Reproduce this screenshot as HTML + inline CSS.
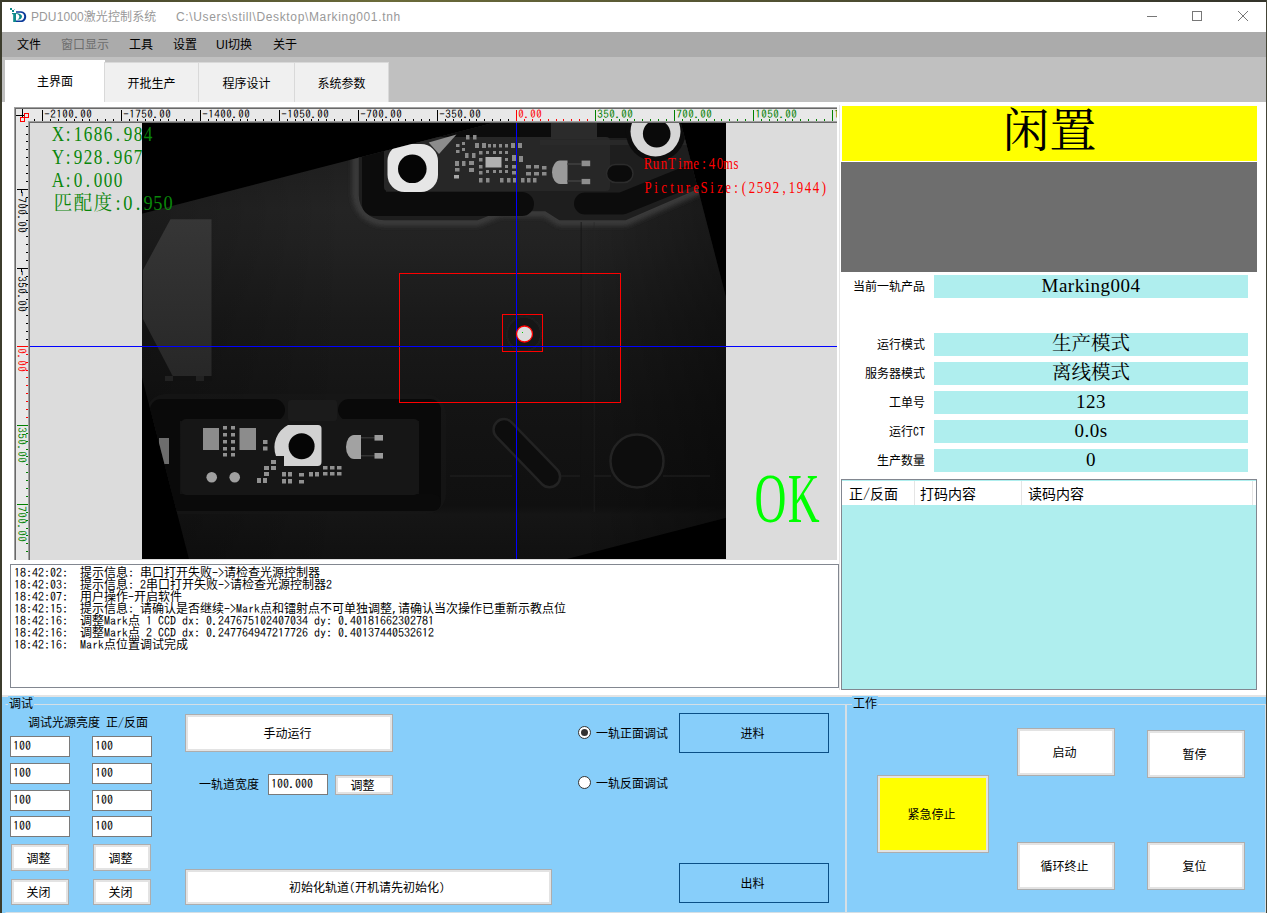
<!DOCTYPE html>
<html lang="zh-CN">
<head>
<meta charset="utf-8">
<title>PDU1000激光控制系统</title>
<style>
*{box-sizing:border-box;margin:0;padding:0}
html,body{width:1267px;height:913px;overflow:hidden;background:#fff}
body{position:relative;font-family:"Liberation Sans","Noto Sans CJK SC",sans-serif;font-size:12px;color:#000}
.abs{position:absolute}
.song{font-family:"Liberation Serif","Noto Serif CJK SC",serif}
.c{font-family:"Noto Sans CJK SC",sans-serif;font-size:12px}
.l{font-family:"IPAGothic","Liberation Mono",monospace;font-size:12px}
#frame{left:0;top:0;width:1267px;height:913px;background:#fff}
#edgeT{left:0;top:0;width:1267px;height:2px;background:linear-gradient(90deg,#3a3a28,#6b6b3a 30%,#4a4a30 70%,#33332a)}
#edgeL{left:0;top:0;width:2px;height:913px;background:#3c3c2c}
#edgeR{left:1266px;top:0;width:1px;height:913px;background:#444436}
#title{left:2px;top:2px;width:1264px;height:30px;background:#fff}
#title .t{top:7px;font-size:12px;color:#999;white-space:nowrap;line-height:16px}
#menu{left:2px;top:32px;width:1264px;height:25px;background:#ababab}
#menu span{position:absolute;top:5px;font-size:12px;line-height:17px;white-space:nowrap}
#tabs{left:2px;top:57px;width:1264px;height:45px;background:#c0c0c0}
.tab{position:absolute;top:62px;height:40px;background:#f0f0f0;border:1px solid #d9d9d9;border-bottom:none;font-size:12px;text-align:center;line-height:42px}
.tab.sel{top:60px;height:42px;background:#fff;border-color:#fff;line-height:42px}
#content{left:2px;top:102px;width:1264px;height:595px;background:#fff}
#bottom{left:2px;top:697px;width:1264px;height:216px;background:#87cefa}
.btn{position:absolute;background:#fff;border:3px solid #e3e3e3;outline:1px solid #adadad;outline-offset:-1px;text-align:center;white-space:nowrap;padding-right:3px}
.fbtn{position:absolute;border:1px solid #0a4f86;text-align:center;white-space:nowrap;padding-right:3px}
.inp{position:absolute;background:#fff;border:1px solid #7a7a7a;line-height:17px;padding-left:2px;white-space:nowrap}
.lbl{position:absolute;white-space:nowrap;line-height:14px}
.rl{left:800px;width:125px;text-align:right}
.val{position:absolute;left:934px;width:314px;height:23px;background:#afeeee;text-align:center;font-size:19px;line-height:21px;white-space:nowrap;letter-spacing:0.5px}
.val.cv{font-size:19.500px;line-height:22.500px;letter-spacing:0}
.gb{position:absolute;border:1px solid #d5dfe5}
.gbl{position:absolute;background:#87cefa;padding:0 1px;line-height:13px;white-space:nowrap}
.radio{position:absolute;width:13px;height:13px;border-radius:50%;border:1px solid #333;background:#fff}
.radio.on::after{content:"";position:absolute;left:2px;top:2px;width:7px;height:7px;border-radius:50%;background:#333}
#log{left:10px;top:564px;width:829px;height:124px;background:#fff;border:1px solid #828790;padding:1px 0 0 3px;overflow:hidden}
.ll{height:12px;line-height:12px;white-space:nowrap}
#rp{left:840px;top:104px;width:418px;height:586px;background:#fff}
#idle{left:842px;top:106px;width:415px;height:55px;background:#ff0;text-align:center;font-size:47px;line-height:50px}
#graybox{left:841px;top:162px;width:416px;height:110px;background:#6e6e6e}
#tbl{left:841px;top:479px;width:416px;height:211px;background:#afeeee;border:1px solid #828790}
#th{position:absolute;left:0;top:1px;width:414px;height:24px;background:#fff}
#th span{position:absolute;top:3px;font-size:14px;line-height:20px;font-weight:400;white-space:nowrap}
#th b{font-family:"IPAGothic","Liberation Mono",monospace;font-weight:400}
#th i{position:absolute;top:0;width:1px;height:24px;background:#e5e5e5}
</style>
</head>
<body>
<div id="frame" class="abs"></div>
<div id="title" class="abs">
  <span class="abs t" style="left:29px;letter-spacing:0.100px">PDU1000激光控制系统</span>
  <span class="abs t" style="left:174px;letter-spacing:0.650px">C:\Users\still\Desktop\Marking001.tnh</span>
  <svg class="abs" style="left:0;top:0" width="1264" height="30" viewBox="2 2 1264 30">
    <g stroke="#777" fill="none" shape-rendering="crispEdges">
      <line x1="1147" y1="16.500" x2="1157" y2="16.500"/>
      <rect x="1192.500" y="11.500" width="9" height="9"/>
    </g>
    <g stroke="#777" fill="none"><line x1="1238" y1="11" x2="1248" y2="21"/><line x1="1248" y1="11" x2="1238" y2="21"/></g>
    <g id="logo">
      <rect x="10" y="8" width="2" height="2" fill="#0e8a8a"/><rect x="12" y="10" width="2" height="2" fill="#0e8a8a"/><rect x="14" y="9" width="1" height="1" fill="#8fcaca"/>
      <rect x="12" y="13" width="4" height="1.200" fill="#0e8a8a"/><rect x="13.200" y="13" width="2.800" height="9" fill="#0e8a8a"/>
      <path d="M16,13.300 C19,13 22,14.500 22,16.500 C22,18.500 20,19.800 17.300,19.800 C18.800,18.800 19.500,17.800 19.300,16.300 C19,14.600 17.500,14 16,14 Z" fill="#0e8a8a"/>
      <path d="M16,11.200 H21 C24.500,11.500 26.200,14 26.200,16.400 C26.200,19.500 24,22 21,22 H16 V20.600 H20.500 C22.800,20.500 24.200,18.800 24.200,16.500 C24.200,14.300 22.800,12.800 20.300,12.700 H16 Z" fill="#0a3a9a"/>
    </g>
  </svg>
</div>
<div id="menu" class="abs">
  <span style="left:15px">文件</span>
  <span style="left:59px;color:#6d6d6d">窗口显示</span>
  <span style="left:127px">工具</span>
  <span style="left:171px">设置</span>
  <span style="left:214px">UI切换</span>
  <span style="left:271px">关于</span>
</div>
<div id="tabs" class="abs"></div>
<div class="tab sel" style="left:5px;width:100px">主界面</div>
<div class="tab" style="left:104px;width:95px">开批生产</div>
<div class="tab" style="left:198px;width:97px">程序设计</div>
<div class="tab" style="left:294px;width:95px">系统参数</div>
<div id="content" class="abs"></div>
<div class="abs" style="left:2px;top:695px;width:1264px;height:2px;background:#e4e4e4"></div>

<svg class="abs" id="cam" style="left:0;top:0" width="1267" height="913" viewBox="0 0 1267 913">
<defs>
<clipPath id="rulclip"><rect x="16" y="109" width="821" height="12"/></clipPath>
<clipPath id="imgclip"><rect x="142" y="123" width="584" height="436"/></clipPath>
<clipPath id="rotclip"><polygon points="102.400,224 669.100,77.400 779.400,504 212.700,650.600"/></clipPath>
<linearGradient id="bgG" gradientUnits="userSpaceOnUse" x1="0" y1="122" x2="0" y2="558">
<stop offset="0" stop-color="#1c1c1c"/><stop offset="0.2" stop-color="#242424"/><stop offset="0.28" stop-color="#222"/><stop offset="0.45" stop-color="#1a1a1a"/><stop offset="0.65" stop-color="#141414"/><stop offset="0.88" stop-color="#101010"/><stop offset="0.9" stop-color="#151515"/><stop offset="1" stop-color="#111"/>
</linearGradient>
<linearGradient id="sideG" gradientUnits="userSpaceOnUse" x1="142" y1="0" x2="726" y2="0">
<stop offset="0" stop-color="#000" stop-opacity="0.25"/><stop offset="0.35" stop-color="#000" stop-opacity="0"/><stop offset="0.75" stop-color="#000" stop-opacity="0"/><stop offset="1" stop-color="#000" stop-opacity="0.35"/>
</linearGradient>
<linearGradient id="trapG" gradientUnits="userSpaceOnUse" x1="0" y1="219" x2="0" y2="376">
<stop offset="0" stop-color="#363636"/><stop offset="1" stop-color="#272727"/>
</linearGradient>
<filter id="blur3" x="-20%" y="-20%" width="140%" height="140%"><feGaussianBlur stdDeviation="2.500"/></filter>
<filter id="blur1" x="-20%" y="-20%" width="140%" height="140%"><feGaussianBlur stdDeviation="0.700"/></filter>
</defs>
<rect x="839" y="105" width="1" height="585" fill="#e6e6e6"/>
<rect x="14" y="107" width="823" height="453" fill="#a0a0a0"/>
<rect x="15" y="108" width="822" height="452" fill="#696969"/>
<rect x="16" y="109" width="821" height="451" fill="#e8e8e8"/>
<rect x="28" y="121" width="809" height="439" fill="#a0a0a0"/>
<rect x="29" y="122" width="808" height="438" fill="#696969"/>
<rect x="30" y="123" width="807" height="437" fill="#dcdcdc"/>
<g font-family="'IPAGothic','Liberation Mono',monospace" font-size="11" shape-rendering="crispEdges">
<rect x="42" y="110" width="1" height="11" fill="#000"/>
<text text-anchor="middle" x="47 53 59 65 71 77 83 89" y="117.5" fill="#000">-2100.00</text>
<rect x="50" y="119" width="1" height="2" fill="#000"/>
<rect x="58" y="119" width="1" height="2" fill="#000"/>
<rect x="66" y="119" width="1" height="2" fill="#000"/>
<rect x="74" y="119" width="1" height="2" fill="#000"/>
<rect x="82" y="119" width="1" height="2" fill="#000"/>
<rect x="89" y="119" width="1" height="2" fill="#000"/>
<rect x="97" y="119" width="1" height="2" fill="#000"/>
<rect x="105" y="119" width="1" height="2" fill="#000"/>
<rect x="113" y="119" width="1" height="2" fill="#000"/>
<rect x="121" y="110" width="1" height="11" fill="#000"/>
<text text-anchor="middle" x="126 132 138 144 150 156 162 168" y="117.5" fill="#000">-1750.00</text>
<rect x="129" y="119" width="1" height="2" fill="#000"/>
<rect x="137" y="119" width="1" height="2" fill="#000"/>
<rect x="145" y="119" width="1" height="2" fill="#000"/>
<rect x="153" y="119" width="1" height="2" fill="#000"/>
<rect x="160" y="119" width="1" height="2" fill="#000"/>
<rect x="168" y="119" width="1" height="2" fill="#000"/>
<rect x="176" y="119" width="1" height="2" fill="#000"/>
<rect x="184" y="119" width="1" height="2" fill="#000"/>
<rect x="192" y="119" width="1" height="2" fill="#000"/>
<rect x="200" y="110" width="1" height="11" fill="#000"/>
<text text-anchor="middle" x="205 211 217 223 229 235 241 247" y="117.5" fill="#000">-1400.00</text>
<rect x="208" y="119" width="1" height="2" fill="#000"/>
<rect x="216" y="119" width="1" height="2" fill="#000"/>
<rect x="224" y="119" width="1" height="2" fill="#000"/>
<rect x="232" y="119" width="1" height="2" fill="#000"/>
<rect x="240" y="119" width="1" height="2" fill="#000"/>
<rect x="247" y="119" width="1" height="2" fill="#000"/>
<rect x="255" y="119" width="1" height="2" fill="#000"/>
<rect x="263" y="119" width="1" height="2" fill="#000"/>
<rect x="271" y="119" width="1" height="2" fill="#000"/>
<rect x="279" y="110" width="1" height="11" fill="#000"/>
<text text-anchor="middle" x="284 290 296 302 308 314 320 326" y="117.5" fill="#000">-1050.00</text>
<rect x="287" y="119" width="1" height="2" fill="#000"/>
<rect x="295" y="119" width="1" height="2" fill="#000"/>
<rect x="303" y="119" width="1" height="2" fill="#000"/>
<rect x="311" y="119" width="1" height="2" fill="#000"/>
<rect x="318" y="119" width="1" height="2" fill="#000"/>
<rect x="326" y="119" width="1" height="2" fill="#000"/>
<rect x="334" y="119" width="1" height="2" fill="#000"/>
<rect x="342" y="119" width="1" height="2" fill="#000"/>
<rect x="350" y="119" width="1" height="2" fill="#000"/>
<rect x="358" y="110" width="1" height="11" fill="#000"/>
<text text-anchor="middle" x="363 369 375 381 387 393 399" y="117.5" fill="#000">-700.00</text>
<rect x="366" y="119" width="1" height="2" fill="#000"/>
<rect x="374" y="119" width="1" height="2" fill="#000"/>
<rect x="382" y="119" width="1" height="2" fill="#000"/>
<rect x="390" y="119" width="1" height="2" fill="#000"/>
<rect x="398" y="119" width="1" height="2" fill="#000"/>
<rect x="405" y="119" width="1" height="2" fill="#000"/>
<rect x="413" y="119" width="1" height="2" fill="#000"/>
<rect x="421" y="119" width="1" height="2" fill="#000"/>
<rect x="429" y="119" width="1" height="2" fill="#000"/>
<rect x="437" y="110" width="1" height="11" fill="#000"/>
<text text-anchor="middle" x="442 448 454 460 466 472 478" y="117.5" fill="#000">-350.00</text>
<rect x="445" y="119" width="1" height="2" fill="#000"/>
<rect x="453" y="119" width="1" height="2" fill="#000"/>
<rect x="461" y="119" width="1" height="2" fill="#000"/>
<rect x="469" y="119" width="1" height="2" fill="#000"/>
<rect x="476" y="119" width="1" height="2" fill="#000"/>
<rect x="484" y="119" width="1" height="2" fill="#000"/>
<rect x="492" y="119" width="1" height="2" fill="#000"/>
<rect x="500" y="119" width="1" height="2" fill="#000"/>
<rect x="508" y="119" width="1" height="2" fill="#000"/>
<rect x="516" y="110" width="1" height="11" fill="#f00"/>
<text text-anchor="middle" x="521 527 533 539" y="117.5" fill="#f00">0.00</text>
<rect x="524" y="119" width="1" height="2" fill="#f00"/>
<rect x="532" y="119" width="1" height="2" fill="#f00"/>
<rect x="540" y="119" width="1" height="2" fill="#f00"/>
<rect x="548" y="119" width="1" height="2" fill="#f00"/>
<rect x="556" y="119" width="1" height="2" fill="#f00"/>
<rect x="563" y="119" width="1" height="2" fill="#f00"/>
<rect x="571" y="119" width="1" height="2" fill="#f00"/>
<rect x="579" y="119" width="1" height="2" fill="#f00"/>
<rect x="587" y="119" width="1" height="2" fill="#f00"/>
<rect x="595" y="110" width="1" height="11" fill="#008000"/>
<text text-anchor="middle" x="600 606 612 618 624 630" y="117.5" fill="#008000">350.00</text>
<rect x="603" y="119" width="1" height="2" fill="#008000"/>
<rect x="611" y="119" width="1" height="2" fill="#008000"/>
<rect x="619" y="119" width="1" height="2" fill="#008000"/>
<rect x="627" y="119" width="1" height="2" fill="#008000"/>
<rect x="634" y="119" width="1" height="2" fill="#008000"/>
<rect x="642" y="119" width="1" height="2" fill="#008000"/>
<rect x="650" y="119" width="1" height="2" fill="#008000"/>
<rect x="658" y="119" width="1" height="2" fill="#008000"/>
<rect x="666" y="119" width="1" height="2" fill="#008000"/>
<rect x="674" y="110" width="1" height="11" fill="#008000"/>
<text text-anchor="middle" x="679 685 691 697 703 709" y="117.5" fill="#008000">700.00</text>
<rect x="682" y="119" width="1" height="2" fill="#008000"/>
<rect x="690" y="119" width="1" height="2" fill="#008000"/>
<rect x="698" y="119" width="1" height="2" fill="#008000"/>
<rect x="706" y="119" width="1" height="2" fill="#008000"/>
<rect x="714" y="119" width="1" height="2" fill="#008000"/>
<rect x="721" y="119" width="1" height="2" fill="#008000"/>
<rect x="729" y="119" width="1" height="2" fill="#008000"/>
<rect x="737" y="119" width="1" height="2" fill="#008000"/>
<rect x="745" y="119" width="1" height="2" fill="#008000"/>
<rect x="753" y="110" width="1" height="11" fill="#008000"/>
<text text-anchor="middle" x="758 764 770 776 782 788 794" y="117.5" fill="#008000">1050.00</text>
<rect x="761" y="119" width="1" height="2" fill="#008000"/>
<rect x="769" y="119" width="1" height="2" fill="#008000"/>
<rect x="777" y="119" width="1" height="2" fill="#008000"/>
<rect x="785" y="119" width="1" height="2" fill="#008000"/>
<rect x="792" y="119" width="1" height="2" fill="#008000"/>
<rect x="800" y="119" width="1" height="2" fill="#008000"/>
<rect x="808" y="119" width="1" height="2" fill="#008000"/>
<rect x="816" y="119" width="1" height="2" fill="#008000"/>
<rect x="824" y="119" width="1" height="2" fill="#008000"/>
<rect x="832" y="110" width="1" height="11" fill="#008000"/>
<text x="834" y="117.500" fill="#008000" clip-path="url(#rulclip)">1400.00</text>
<rect x="34" y="119" width="1" height="2" fill="#000"/>
<rect x="17" y="189" width="11" height="1" fill="#000"/>
<rect x="21" y="190" width="1" height="3" fill="#000"/>
<g transform="translate(17.800,191) rotate(90)"><text text-anchor="middle" x="3 9 15 21 27 33 39" y="0" fill="#000">-700.00</text></g>
<rect x="17" y="268" width="11" height="1" fill="#000"/>
<rect x="21" y="269" width="1" height="3" fill="#000"/>
<g transform="translate(17.800,270) rotate(90)"><text text-anchor="middle" x="3 9 15 21 27 33 39" y="0" fill="#000">-350.00</text></g>
<rect x="17" y="346" width="11" height="1" fill="#f00"/>
<g transform="translate(17.800,348) rotate(90)"><text text-anchor="middle" x="3 9 15 21" y="0" fill="#f00">0.00</text></g>
<rect x="17" y="425" width="11" height="1" fill="#008000"/>
<g transform="translate(17.800,427) rotate(90)"><text text-anchor="middle" x="3 9 15 21 27 33" y="0" fill="#008000">350.00</text></g>
<rect x="17" y="504" width="11" height="1" fill="#008000"/>
<g transform="translate(17.800,506) rotate(90)"><text text-anchor="middle" x="3 9 15 21 27 33" y="0" fill="#008000">700.00</text></g>
<rect x="26" y="126" width="2" height="1" fill="#000"/>
<rect x="26" y="134" width="2" height="1" fill="#000"/>
<rect x="26" y="141" width="2" height="1" fill="#000"/>
<rect x="26" y="149" width="2" height="1" fill="#000"/>
<rect x="26" y="157" width="2" height="1" fill="#000"/>
<rect x="26" y="165" width="2" height="1" fill="#000"/>
<rect x="26" y="173" width="2" height="1" fill="#000"/>
<rect x="26" y="181" width="2" height="1" fill="#000"/>
<rect x="26" y="197" width="2" height="1" fill="#000"/>
<rect x="26" y="205" width="2" height="1" fill="#000"/>
<rect x="26" y="213" width="2" height="1" fill="#000"/>
<rect x="26" y="220" width="2" height="1" fill="#000"/>
<rect x="26" y="228" width="2" height="1" fill="#000"/>
<rect x="26" y="236" width="2" height="1" fill="#000"/>
<rect x="26" y="244" width="2" height="1" fill="#000"/>
<rect x="26" y="252" width="2" height="1" fill="#000"/>
<rect x="26" y="260" width="2" height="1" fill="#000"/>
<rect x="26" y="276" width="2" height="1" fill="#000"/>
<rect x="26" y="284" width="2" height="1" fill="#000"/>
<rect x="26" y="292" width="2" height="1" fill="#000"/>
<rect x="26" y="299" width="2" height="1" fill="#000"/>
<rect x="26" y="307" width="2" height="1" fill="#000"/>
<rect x="26" y="315" width="2" height="1" fill="#000"/>
<rect x="26" y="323" width="2" height="1" fill="#000"/>
<rect x="26" y="331" width="2" height="1" fill="#000"/>
<rect x="26" y="339" width="2" height="1" fill="#000"/>
<rect x="26" y="354" width="2" height="1" fill="#f00"/>
<rect x="26" y="362" width="2" height="1" fill="#f00"/>
<rect x="26" y="370" width="2" height="1" fill="#f00"/>
<rect x="26" y="377" width="2" height="1" fill="#f00"/>
<rect x="26" y="385" width="2" height="1" fill="#f00"/>
<rect x="26" y="393" width="2" height="1" fill="#f00"/>
<rect x="26" y="401" width="2" height="1" fill="#f00"/>
<rect x="26" y="409" width="2" height="1" fill="#f00"/>
<rect x="26" y="417" width="2" height="1" fill="#f00"/>
<rect x="26" y="433" width="2" height="1" fill="#008000"/>
<rect x="26" y="441" width="2" height="1" fill="#008000"/>
<rect x="26" y="449" width="2" height="1" fill="#008000"/>
<rect x="26" y="456" width="2" height="1" fill="#008000"/>
<rect x="26" y="464" width="2" height="1" fill="#008000"/>
<rect x="26" y="472" width="2" height="1" fill="#008000"/>
<rect x="26" y="480" width="2" height="1" fill="#008000"/>
<rect x="26" y="488" width="2" height="1" fill="#008000"/>
<rect x="26" y="496" width="2" height="1" fill="#008000"/>
<rect x="26" y="512" width="2" height="1" fill="#008000"/>
<rect x="26" y="520" width="2" height="1" fill="#008000"/>
<rect x="26" y="528" width="2" height="1" fill="#008000"/>
<rect x="26" y="535" width="2" height="1" fill="#008000"/>
<rect x="26" y="543" width="2" height="1" fill="#008000"/>
<rect x="26" y="551" width="2" height="1" fill="#008000"/>
</g>
<g shape-rendering="crispEdges" fill="none">
<line x1="16" y1="115.500" x2="25" y2="115.500" stroke="#000"/>
<line x1="22.500" y1="109" x2="22.500" y2="118" stroke="#000"/>
<rect x="24.500" y="113.500" width="4" height="4" stroke="#f00"/>
<rect x="20.500" y="117.500" width="4" height="4" stroke="#f00"/>
</g>
<rect x="142" y="123" width="584" height="436" fill="#000"/>
<g clip-path="url(#imgclip)">
<g clip-path="url(#rotclip)">
<rect x="90" y="60" width="700" height="600" fill="url(#bgG)"/>
<rect x="90" y="60" width="700" height="600" fill="url(#sideG)"/>
<!-- left trapezoid -->
<polygon points="170.500,219.300 211.500,219.300 211.500,376 172.700,376 143,319 143,270" fill="url(#trapG)"/>
<rect x="150" y="376" width="62" height="5" fill="#111"/>
<rect x="165" y="376" width="8" height="5" fill="#222"/><rect x="196" y="376" width="8" height="5" fill="#222"/>
<!-- recess halo edge -->
<path d="M356,100 V194 a28,28 0 0 0 28,28 H478 l22,-9 H545 l14,9 H626 L693,193 L745,172" fill="none" stroke="#3c3c3c" stroke-width="7" filter="url(#blur3)"/>
<!-- recess floor -->
<path d="M358,100 V195 a26,26 0 0 0 26,26 H478 l22,-9 H545 l14,9 H626 L693,192 L745,171 V100 Z" fill="#1e1e1e" stroke="#3a3a3a" stroke-width="1.500"/>
<!-- seams -->
<rect x="580.500" y="222" width="1.500" height="290" fill="#121212" opacity="0.500"/>
<rect x="593.500" y="222" width="1.500" height="290" fill="#242424" opacity="0.350"/>
<!-- dark slots -->
<path d="M374,100 V204 H522" fill="none" stroke="#0c0c0c" stroke-width="24" stroke-linecap="round" stroke-linejoin="round"/>
<rect x="380" y="100" width="171" height="37" fill="#0c0c0c"/>
<rect x="597" y="100" width="50" height="38" fill="#0c0c0c"/>
<path d="M585,203.500 H622 L700,172" fill="none" stroke="#0c0c0c" stroke-width="22" stroke-linecap="round" stroke-linejoin="round"/>
<!-- pcb -->
<rect x="384" y="137" width="226" height="54" rx="4" fill="#272727"/>
<rect x="551" y="118" width="46" height="21" fill="#2b2b2b"/>
<rect x="540" y="140" width="200" height="5" fill="#2c2c2c" opacity="0.7"/>
<!-- left ring -->
<rect x="387.500" y="144" width="50.500" height="48" rx="17" fill="#e6e6e6"/>
<circle cx="412.300" cy="168.800" r="14.300" fill="#050505"/>
<polygon points="428.700,142.600 456.500,134.400 439,153.900" fill="#8c8c8c"/>
<!-- right ring -->
<circle cx="655.700" cy="131.500" r="30" fill="#0c0c0c"/>
<circle cx="655.500" cy="131.500" r="25" fill="#d6d6d6"/>
<circle cx="656.700" cy="133.800" r="13.800" fill="#0a0a0a"/>
<rect x="606.500" y="164.500" width="26.500" height="18" rx="9" fill="#0b0b0b" stroke="#2c2c2c" stroke-width="1.500"/>
<!-- half moon + pads -->
<path d="M567.500,160.600 V184 H560 a8,11.700 0 0 1 0,-23.400 z" fill="#9a9a9a"/>
<rect x="567.500" y="163" width="14" height="2" fill="#3a3a3a"/><rect x="567.500" y="180" width="14" height="2" fill="#3a3a3a"/>
<rect x="581.600" y="160.600" width="8.600" height="5.600" fill="#8e8e8e"/>
<rect x="581.600" y="178.900" width="8.600" height="5.300" fill="#8e8e8e"/>
<!-- components top -->
<g fill="#8a8a8a" filter="url(#blur1)">
<rect x="485.500" y="157" width="16" height="10.500" fill="#b0b0b0"/>
<rect x="466" y="135" width="3.500" height="4.500"/><rect x="473" y="135" width="3.500" height="4.500"/>
<rect x="456" y="144" width="3.500" height="3"/><rect x="462" y="142" width="3" height="3"/>
<rect x="456" y="150" width="3.500" height="3"/><rect x="462" y="148" width="3" height="3"/>
<rect x="475" y="143" width="4" height="5"/><rect x="482" y="143" width="4" height="5"/><rect x="488" y="144" width="3" height="3.500"/><rect x="493" y="144" width="3" height="3.500"/><rect x="499" y="144" width="3" height="3.500"/><rect x="505" y="144" width="3" height="3.500"/>
<rect x="511" y="143" width="4" height="5"/><rect x="518" y="143" width="4" height="5"/>
<rect x="465" y="153" width="3.500" height="5"/><rect x="472" y="153" width="3.500" height="5"/><rect x="479" y="151" width="3.500" height="3.500"/><rect x="486" y="151" width="3" height="3"/><rect x="493" y="151" width="3" height="3"/><rect x="499" y="151" width="3" height="3"/><rect x="505" y="151" width="3" height="3"/>
<rect x="479" y="158" width="3.500" height="3.500"/><rect x="505" y="158" width="3" height="3"/><rect x="512" y="155" width="4" height="6"/><rect x="519" y="156" width="4" height="6"/>
<rect x="455" y="161" width="4" height="5"/><rect x="462" y="161" width="3.500" height="5"/><rect x="469" y="161" width="5" height="4"/>
<rect x="479" y="165" width="3.500" height="3.500"/><rect x="505" y="165" width="3" height="3"/><rect x="512" y="165" width="5" height="3.500"/>
<rect x="455" y="168" width="4.500" height="3.500"/><rect x="469" y="168" width="5" height="4"/>
<rect x="479" y="171" width="3.500" height="3.500"/><rect x="486" y="170" width="3" height="3"/><rect x="493" y="170" width="3" height="3"/><rect x="499" y="170" width="3" height="3"/><rect x="505" y="170" width="3" height="3"/><rect x="512" y="171" width="5" height="3.500"/>
<rect x="454" y="175" width="5" height="3.500" fill="#aaa"/>
<rect x="479" y="178" width="3.500" height="4.500"/><rect x="486" y="178" width="3.500" height="4.500"/>
<rect x="500" y="178" width="3.500" height="4.500"/><rect x="507" y="178" width="3.500" height="4.500"/><rect x="513" y="178" width="3.500" height="4.500"/><rect x="521" y="178" width="3.500" height="4.500"/><rect x="527" y="178" width="3.500" height="4.500"/><rect x="533" y="178" width="3.500" height="4.500"/>
<rect x="526" y="165" width="5" height="3.500"/><rect x="534" y="165" width="5" height="3.500"/><rect x="526" y="172" width="5" height="3.500"/><rect x="534" y="172" width="5" height="3.500"/><rect x="542" y="166" width="4.500" height="3.500"/><rect x="542" y="172" width="4.500" height="3.500"/>
</g>
<!-- bottom recess: dark slots around pcb -->
<rect x="146" y="394" width="300" height="120" rx="20" fill="#181818" opacity="0.6"/>
<rect x="150" y="399" width="135" height="22" rx="11" fill="#090909"/>
<rect x="338" y="399" width="100" height="22" rx="11" fill="#090909"/>
<rect x="419" y="399" width="22" height="112" rx="11" fill="#090909"/>
<rect x="150" y="494" width="291" height="17" rx="8" fill="#0a0a0a"/>
<rect x="150" y="410" width="30" height="95" fill="#0a0a0a"/>
<rect x="181" y="419" width="238" height="76" rx="5" fill="#161616"/>
<rect x="288" y="400" width="49" height="21" rx="3" fill="#1b1b1b"/>
<!-- bottom components -->
<rect x="159" y="438" width="10" height="26" fill="#6d6d6d"/>
<rect x="203" y="428" width="16" height="22" fill="#8c8c8c"/>
<rect x="239.500" y="428" width="16.500" height="22" fill="#8c8c8c"/>
<g fill="#909090" filter="url(#blur1)">
<rect x="223" y="426" width="4" height="3.500"/><rect x="231" y="426" width="4" height="3.500"/>
<rect x="223" y="433" width="4" height="3.500"/><rect x="231" y="433" width="4" height="3.500"/>
<rect x="223" y="440" width="4" height="3.500"/><rect x="231" y="440" width="4" height="3.500"/>
<rect x="223" y="447" width="4" height="3.500"/><rect x="231" y="447" width="4" height="3.500"/>
<rect x="223" y="453" width="4" height="3.500"/><rect x="231" y="453" width="4" height="3.500"/>
<rect x="263" y="440" width="4.500" height="4"/><rect x="263" y="446.500" width="4.500" height="4"/>
<rect x="271" y="460" width="5" height="4"/><rect x="264" y="466" width="5" height="4"/><rect x="271" y="466" width="5" height="4"/><rect x="264" y="472" width="5" height="4"/>
<rect x="257" y="478" width="4" height="5"/><rect x="263" y="478" width="4" height="5"/>
<rect x="282" y="472" width="4" height="4.500"/><rect x="288" y="472" width="4" height="4.500"/><rect x="282" y="479" width="4" height="4.500"/><rect x="288" y="479" width="4" height="4.500"/>
<rect x="299" y="473" width="5" height="3.500"/><rect x="299" y="480" width="5" height="3.500"/>
<rect x="309" y="472" width="4" height="4.500"/><rect x="315" y="472" width="4" height="4.500"/>
<rect x="323" y="466" width="4.500" height="3.500"/><rect x="330" y="466" width="4.500" height="3.500"/><rect x="337" y="466" width="4.500" height="3.500"/>
<rect x="323" y="472" width="4.500" height="3.500"/><rect x="330" y="472" width="4.500" height="3.500"/><rect x="337" y="472" width="4.500" height="3.500"/>
</g>
<circle cx="211.700" cy="477.200" r="5.300" fill="#a0a0a0"/><circle cx="234.700" cy="477.200" r="5.300" fill="#a0a0a0"/>
<!-- bottom ring -->
<path d="M288,425 H318 a3.500,3.500 0 0 1 3.500,3.500 V462 a4,4 0 0 1 -4,4 H284 V456 H276 A25,25 0 0 1 288,425 z" fill="#d2d2d2"/>
<circle cx="301.600" cy="446.300" r="13" fill="#050505"/>
<path d="M361,435 V459 H354 a8,12 0 0 1 0,-24 z" fill="#a2a2a2"/>
<rect x="361" y="437" width="14" height="1.500" fill="#333"/><rect x="361" y="455" width="14" height="1.500" fill="#333"/>
<rect x="374.500" y="435" width="8.500" height="5.600" fill="#9a9a9a"/><rect x="374.500" y="453" width="8.500" height="5.600" fill="#9a9a9a"/>
<!-- faint bottom-right shapes -->
<g fill="#0d0d0d" stroke="#232323" stroke-width="2.500">
<rect x="0" y="0" width="86.500" height="21" rx="10.500" transform="translate(504.300,414.750) rotate(46)"/>
<circle cx="637" cy="461" r="26.500"/>
<path d="M450,476 H512 M560,476 H580 M594,476 H611 M663,476 H710" stroke-width="1.200" fill="none"/>
</g>
<!-- mark halo -->
<circle cx="524" cy="334" r="17" fill="#131313" stroke="#1f1f1f" stroke-width="2" filter="url(#blur1)"/>

</g>
</g>
<g shape-rendering="crispEdges" fill="none">
<rect x="399.500" y="273.500" width="221" height="129" stroke="#f00"/>
<rect x="502.500" y="314.500" width="40" height="37" stroke="#f00"/>
<line x1="516.500" y1="123" x2="516.500" y2="559" stroke="#00f"/>
<line x1="30" y1="346.500" x2="837" y2="346.500" stroke="#00f"/>
</g>
<circle cx="524.500" cy="334" r="8" fill="#dcdcdc" stroke="#f00" stroke-width="1.300"/>
<rect x="522" y="332" width="1" height="1" fill="#0c0"/>
<g font-family="'Liberation Serif','Noto Serif CJK SC',serif" font-size="20" fill="#0a860a">
<g transform="scale(0.86,1)"><text text-anchor="middle" x="67.4 79.1 90.7 102.3 114 125.6 137.2 148.8 160.5 172.1" y="141" >X:1686.984</text></g>
<g transform="scale(0.86,1)"><text text-anchor="middle" x="67.4 79.1 90.7 102.3 114 125.6 137.2 148.8 160.5" y="164" >Y:928.967</text></g>
<g transform="scale(0.86,1)"><text text-anchor="middle" x="67.4 79.1 90.7 102.3 114 125.6 137.2" y="187" >A:0.000</text></g>
<g transform="scale(0.92,1)"><text text-anchor="middle" x="68.5 90.2 112 128.3 139.1 150 160.9 171.7 182.6" y="210" >匹配度:0.950</text></g>
</g>
<g font-family="'Liberation Serif','Noto Serif CJK SC',serif" font-size="16" fill="#f00">
<g transform="scale(0.8,1)"><text text-anchor="middle" x="810 820 830 840 850 860 870 880 890 900 910 920" y="169" >RunTime:40ms</text></g>
<g transform="scale(0.8,1)"><text text-anchor="middle" x="810 820 830 840 850 860 870 880 890 900 910 920 930 940 950 960 970 980 990 1000 1010 1020 1030" y="193" >PictureSize:(2592,1944)</text></g>
</g>
<text font-family="'Liberation Serif','Noto Serif CJK SC',serif" font-size="70" fill="#00ff00" transform="translate(754.500,522) scale(0.63,1)" letter-spacing="2.400">OK</text>
</svg>

<div id="log" class="abs"><div class="ll"><span class="l">18:42:02:&nbsp;&nbsp;</span><span class="c">提示信息</span><span class="l">:&nbsp;</span><span class="c">串口打开失败</span><span class="l">-&gt;</span><span class="c">请检查光源控制器</span></div><div class="ll"><span class="l">18:42:03:&nbsp;&nbsp;</span><span class="c">提示信息</span><span class="l">:&nbsp;2</span><span class="c">串口打开失败</span><span class="l">-&gt;</span><span class="c">请检查光源控制器</span><span class="l">2</span></div><div class="ll"><span class="l">18:42:07:&nbsp;&nbsp;</span><span class="c">用户操作</span><span class="l">-</span><span class="c">开启软件</span></div><div class="ll"><span class="l">18:42:15:&nbsp;&nbsp;</span><span class="c">提示信息</span><span class="l">:&nbsp;</span><span class="c">请确认是否继续</span><span class="l">-&gt;Mark</span><span class="c">点和镭射点不可单独调整</span><span class="l">,</span><span class="c">请确认当次操作已重新示教点位</span></div><div class="ll"><span class="l">18:42:16:&nbsp;&nbsp;</span><span class="c">调整</span><span class="l">Mark</span><span class="c">点</span><span class="l">&nbsp;1&nbsp;CCD&nbsp;dx:&nbsp;0.247675102407034&nbsp;dy:&nbsp;0.40181662302781</span></div><div class="ll"><span class="l">18:42:16:&nbsp;&nbsp;</span><span class="c">调整</span><span class="l">Mark</span><span class="c">点</span><span class="l">&nbsp;2&nbsp;CCD&nbsp;dx:&nbsp;0.247764947217726&nbsp;dy:&nbsp;0.40137440532612</span></div><div class="ll"><span class="l">18:42:16:&nbsp;&nbsp;Mark</span><span class="c">点位置调试完成</span></div></div>
<div id="rp" class="abs"></div>
<div id="idle" class="abs song">闲置</div>
<div id="graybox" class="abs"></div>
<div class="lbl rl" style="top:279px"><span class="c">当前一轨产品</span></div><div class="val song" style="top:275px">Marking004</div>
<div class="lbl rl" style="top:337px"><span class="c">运行模式</span></div><div class="val song cv" style="top:333px">生产模式</div>
<div class="lbl rl" style="top:366px"><span class="c">服务器模式</span></div><div class="val song cv" style="top:362px">离线模式</div>
<div class="lbl rl" style="top:395px"><span class="c">工单号</span></div><div class="val song" style="top:391px">123</div>
<div class="lbl rl" style="top:424px"><span class="c">运行</span><span class="l">CT</span></div><div class="val song" style="top:420px">0.0s</div>
<div class="lbl rl" style="top:453px"><span class="c">生产数量</span></div><div class="val song" style="top:449px">0</div>
<div id="tbl" class="abs"><div id="th"><span style="left:7px">正<b>/</b>反面</span><i style="left:72px"></i><span style="left:78px">打码内容</span><i style="left:179px"></i><span style="left:186px">读码内容</span><i style="left:410px"></i></div></div>

<div id="bottom" class="abs"></div>
<div class="gb" style="left:5px;top:704px;width:841px;height:209px;border-left-color:transparent"></div><div class="gbl" style="left:8px;top:696px"><span class="c">调试</span></div>
<div class="gb" style="left:846px;top:704px;width:420px;height:209px"></div><div class="gbl" style="left:852px;top:696px"><span class="c">工作</span></div>
<div class="lbl" style="left:28px;top:715px"><span class="c">调试光源亮度</span><span class="l">&nbsp;</span><span class="c">正</span><span class="l">/</span><span class="c">反面</span></div>
<div class="inp" style="left:10px;top:736px;width:60px;height:21px"><span class="l">100</span></div>
<div class="inp" style="left:92px;top:736px;width:60px;height:21px"><span class="l">100</span></div>
<div class="inp" style="left:10px;top:763px;width:60px;height:21px"><span class="l">100</span></div>
<div class="inp" style="left:92px;top:763px;width:60px;height:21px"><span class="l">100</span></div>
<div class="inp" style="left:10px;top:790px;width:60px;height:21px"><span class="l">100</span></div>
<div class="inp" style="left:92px;top:790px;width:60px;height:21px"><span class="l">100</span></div>
<div class="inp" style="left:10px;top:816px;width:60px;height:21px"><span class="l">100</span></div>
<div class="inp" style="left:92px;top:816px;width:60px;height:21px"><span class="l">100</span></div>
<div class="btn" style="left:11px;top:844px;width:58px;height:27px;line-height:21px;"><span class="c">调整</span></div>
<div class="btn" style="left:93px;top:844px;width:58px;height:27px;line-height:21px;"><span class="c">调整</span></div>
<div class="btn" style="left:11px;top:879px;width:58px;height:26px;line-height:20px;"><span class="c">关闭</span></div>
<div class="btn" style="left:93px;top:879px;width:58px;height:26px;line-height:20px;"><span class="c">关闭</span></div>
<div class="btn" style="left:185px;top:714px;width:208px;height:38px;line-height:32px;"><span class="c">手动运行</span></div>
<div class="lbl" style="left:199px;top:777px"><span class="c">一轨道宽度</span></div>
<div class="inp" style="left:268px;top:774px;width:60px;height:21px"><span class="l">100.000</span></div>
<div class="btn" style="left:335px;top:775px;width:58px;height:20px;line-height:14px;"><span class="c">调整</span></div>
<div class="btn" style="left:185px;top:869px;width:367px;height:36px;line-height:30px;"><span class="c">初始化轨道</span><span class="l">(</span><span class="c">开机请先初始化</span><span class="l">)</span></div>
<div class="radio on" style="left:578px;top:726px"></div><div class="lbl" style="left:596px;top:726px"><span class="c">一轨正面调试</span></div>
<div class="radio" style="left:578px;top:776px"></div><div class="lbl" style="left:596px;top:776px"><span class="c">一轨反面调试</span></div>
<div class="fbtn" style="left:679px;top:713px;width:150px;height:40px;line-height:38px"><span class="c">进料</span></div>
<div class="fbtn" style="left:679px;top:863px;width:150px;height:40px;line-height:38px"><span class="c">出料</span></div>
<div class="btn" style="left:877px;top:775px;width:112px;height:78px;line-height:72px;background:#ff0;"><span class="c">紧急停止</span></div>
<div class="btn" style="left:1017px;top:728px;width:98px;height:48px;line-height:42px;"><span class="c">启动</span></div>
<div class="btn" style="left:1147px;top:730px;width:98px;height:48px;line-height:42px;"><span class="c">暂停</span></div>
<div class="btn" style="left:1017px;top:842px;width:98px;height:48px;line-height:42px;"><span class="c">循环终止</span></div>
<div class="btn" style="left:1147px;top:842px;width:98px;height:48px;line-height:42px;"><span class="c">复位</span></div>

<div id="edgeT" class="abs"></div>
<div id="edgeL" class="abs"></div>
<div id="edgeR" class="abs"></div>
</body>
</html>
